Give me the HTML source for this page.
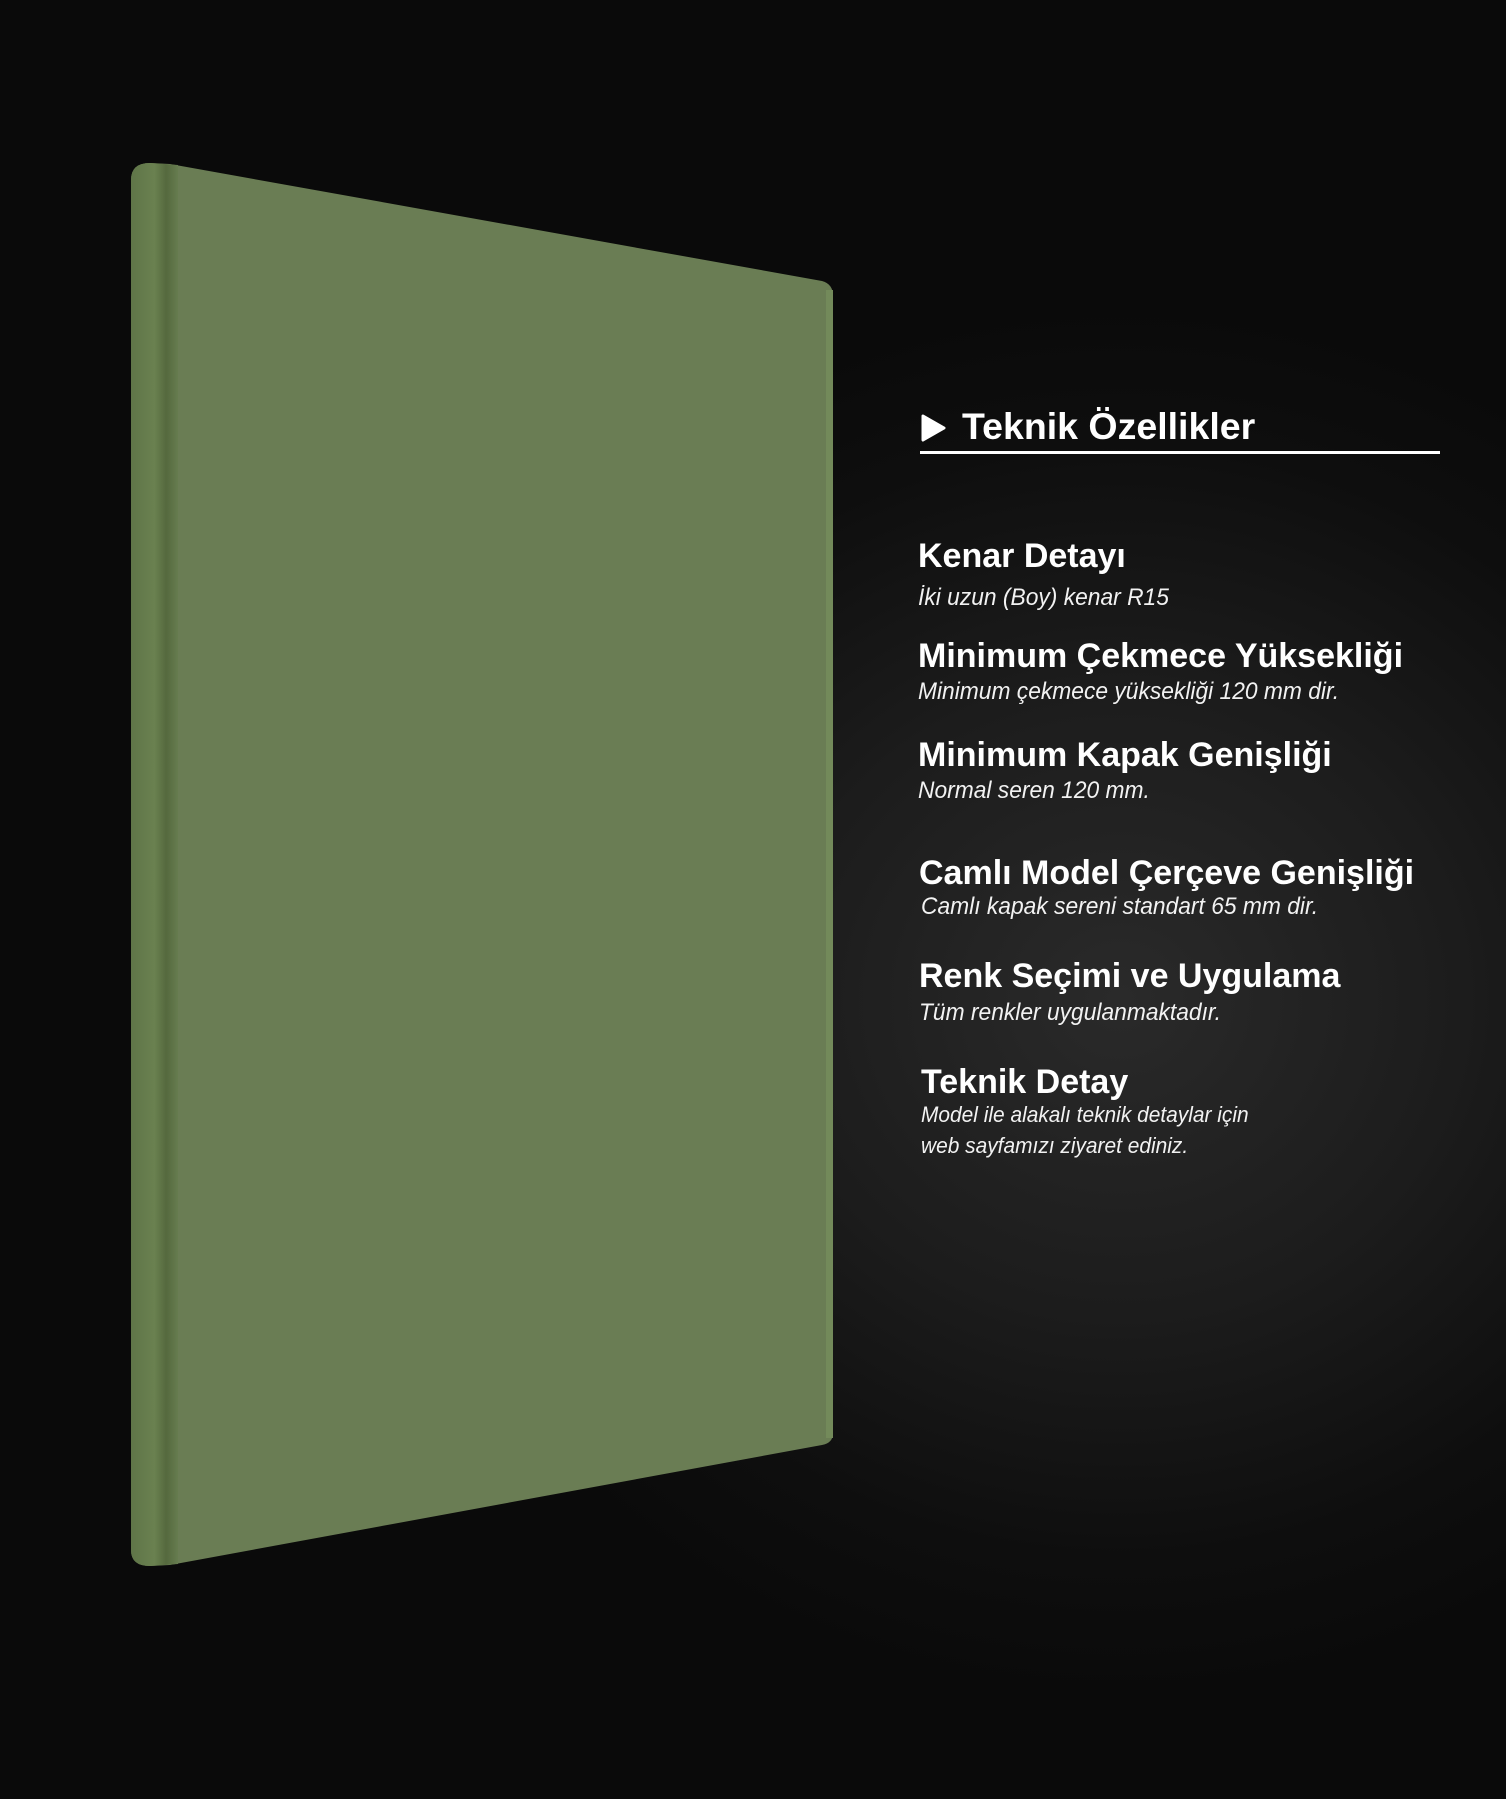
<!DOCTYPE html>
<html><head><meta charset="utf-8"><style>
html,body{margin:0;padding:0}
body{width:1506px;height:1799px;overflow:hidden;position:relative;background:#0a0a0a;font-family:"Liberation Sans",sans-serif;color:#fff}
.bg{position:absolute;inset:0;background:radial-gradient(ellipse 760px 700px at 1120px 1000px,#2a2a2a 0%,#1c1c1c 45%,#0e0e0e 80%,#0a0a0a 100%)}
h3{position:absolute;margin:0;font-weight:bold;font-size:34px;white-space:nowrap}
.s{position:absolute;font-style:italic;font-size:24px;white-space:nowrap;transform:scaleX(.95);transform-origin:left top;color:#f2f2f2}
</style></head><body>
<div class="bg"></div>
<svg width="1506" height="1799" style="position:absolute;left:0;top:0">
<defs>
<linearGradient id="e" x1="0" x2="1">
<stop offset="0" stop-color="#5f7548"/><stop offset=".5" stop-color="#6a8150"/><stop offset=".75" stop-color="#55693e"/><stop offset="1" stop-color="#667c4f"/>
</linearGradient>
</defs>
<path d="M131 180 Q131 163 150 163 L170 164 L822 281 Q833 284 833 296 L833 1433 Q833 1443 822 1445 L170 1565 L150 1566 Q131 1566 131 1550 Z" fill="#6a7d54"/>
<path d="M131 180 Q131 163 150 163 L178 165 L178 1564 L150 1566 Q131 1566 131 1550 Z" fill="url(#e)"/>
<rect x="826" y="290" width="7" height="1148" fill="#738a5a"/>
</svg>
<svg width="26" height="28" style="position:absolute;left:920px;top:414px"><path d="M3 2 L24 14 L3 26 Z" fill="#fff" stroke="#fff" stroke-width="3" stroke-linejoin="round"/></svg>
<h3 style="left:962px;top:405px;font-size:37.5px">Teknik Özellikler</h3>
<div style="position:absolute;left:920px;top:451px;width:520px;height:3px;background:#fff"></div>
<h3 style="left:918px;top:537px">Kenar Detayı</h3>
<div class="s" style="left:918px;top:584px">İki uzun (Boy) kenar R15</div>
<h3 style="left:918px;top:637px">Minimum Çekmece Yüksekliği</h3>
<div class="s" style="left:918px;top:678px">Minimum çekmece yüksekliği 120 mm dir.</div>
<h3 style="left:918px;top:736px">Minimum Kapak Genişliği</h3>
<div class="s" style="left:918px;top:777px">Normal seren 120 mm.</div>
<h3 style="left:919px;top:854px">Camlı Model Çerçeve Genişliği</h3>
<div class="s" style="left:921px;top:893px">Camlı kapak sereni standart 65 mm dir.</div>
<h3 style="left:919px;top:957px">Renk Seçimi ve Uygulama</h3>
<div class="s" style="left:919px;top:999px">Tüm renkler uygulanmaktadır.</div>
<h3 style="left:921px;top:1063px">Teknik Detay</h3>
<div class="s" style="left:921px;top:1102px;font-size:22px">Model ile alakalı teknik detaylar için</div>
<div class="s" style="left:921px;top:1133px;font-size:22px">web sayfamızı ziyaret ediniz.</div>
</body></html>
